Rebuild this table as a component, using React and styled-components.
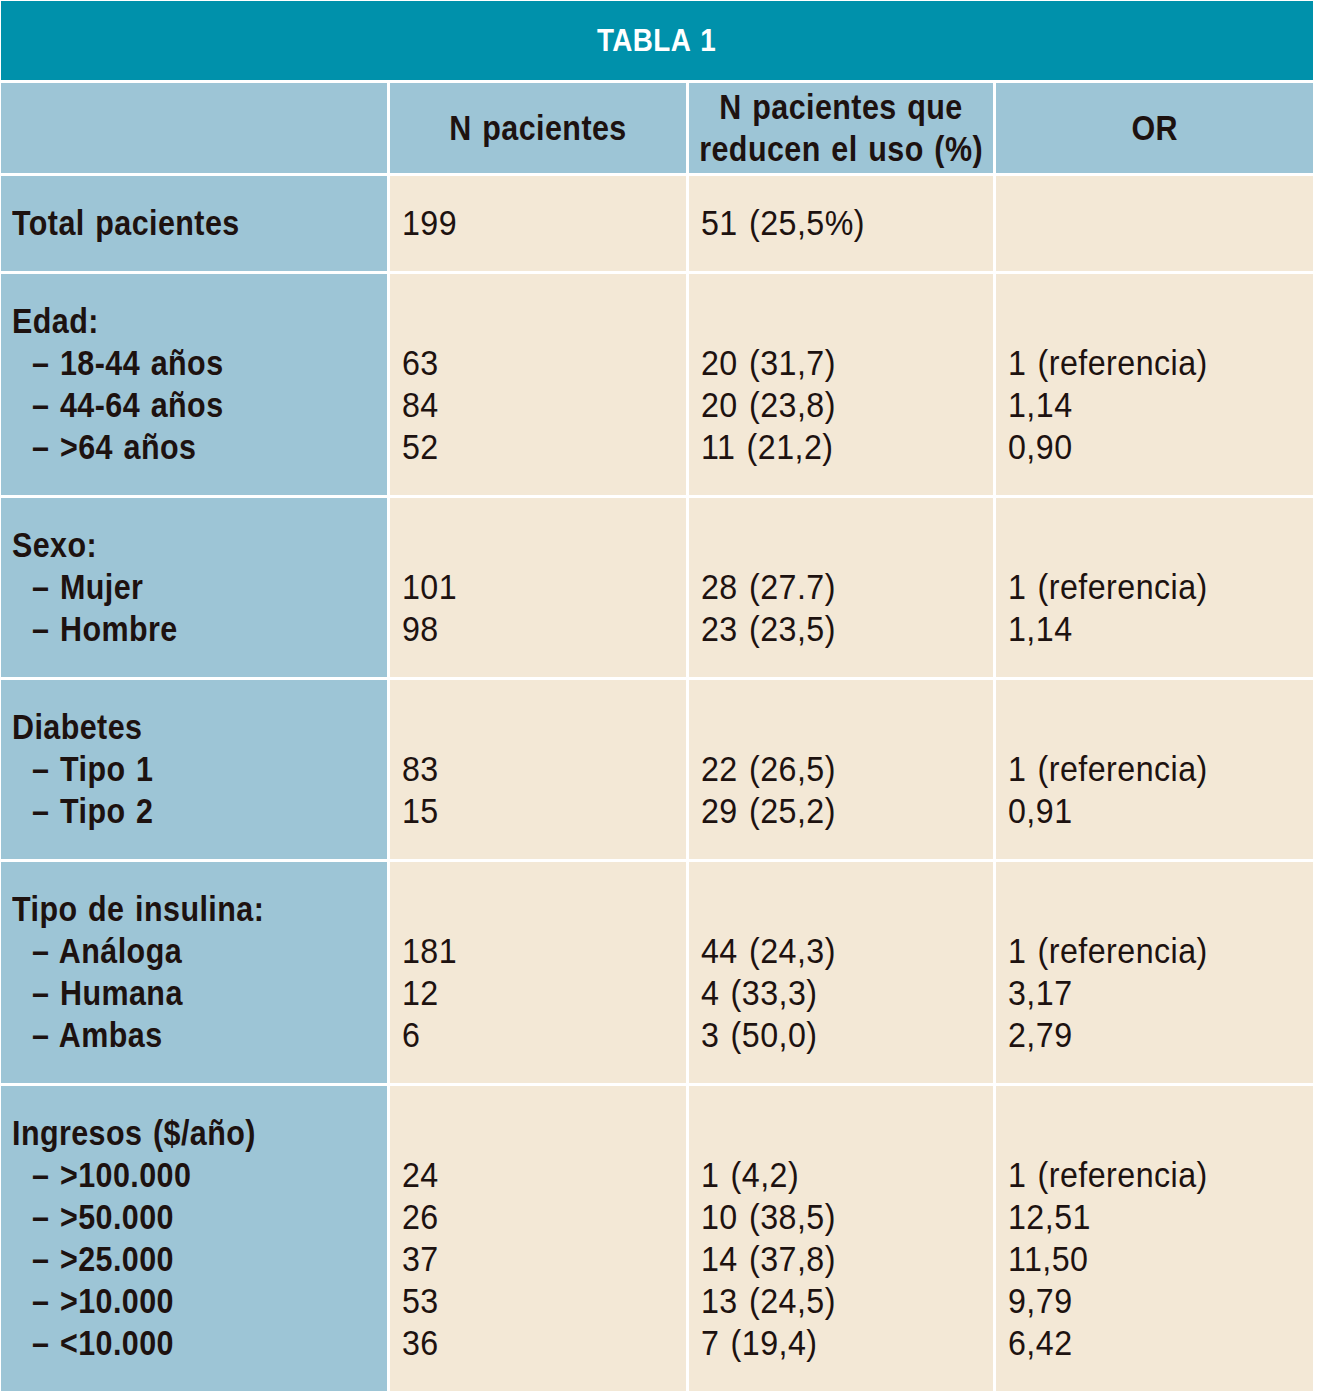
import React from "react";
import styled, { createGlobalStyle } from "styled-components";

const Global = createGlobalStyle`
  html, body { margin: 0; padding: 0; background: #ffffff; }
  body { font-family: "Liberation Sans", Arial, sans-serif; }
`;

const Page = styled.div`
  padding: 1px 8px 2px 1px;
  background: #ffffff;
`;

const Table = styled.div`
  display: grid;
  grid-template-columns: 386px 296px 304px 317px;
  column-gap: 3px;
  row-gap: 3px;
  background: #ffffff;
  color: #1d1210;
`;

const Title = styled.div`
  grid-column: 1 / -1;
  height: 79px;
  background: #0091ab;
  color: #ffffff;
  display: flex;
  align-items: center;
  justify-content: center;
  font-weight: 700;
  font-size: 32px;
`;

const Narrow = styled.span`
  display: inline-block;
  white-space: nowrap;
  letter-spacing: 0.5px;
  word-spacing: 2px;
  transform: scaleX(${(p) => (p.$bold ? 0.87 : 0.92)});
  transform-origin: ${(p) => (p.$center ? "center" : "left")} center;
`;

const HeadCell = styled.div`
  background: #9dc5d6;
  min-height: 84px;
  padding: 3px 0;
  display: flex;
  flex-direction: column;
  align-items: center;
  justify-content: center;
  text-align: center;
  font-weight: 700;
  font-size: 35px;
  line-height: 42px;
`;

const Cell = styled.div`
  background: ${(p) => (p.$label ? "#9dc5d6" : "#f3e8d6")};
  padding: 26px 8px 27px ${(p) => (p.$label ? "11px" : "12px")};
  font-size: 35px;
  line-height: 42px;
  font-weight: ${(p) => (p.$label ? 700 : 400)};
  white-space: nowrap;
`;

const Line = styled.div`
  padding-left: ${(p) => (p.$sub ? "20px" : "0")};
  height: 42px;
`;

const groups = [
  {
    label: ["Total pacientes"],
    a: ["199"],
    b: ["51 (25,5%)"],
    c: [""],
  },
  {
    label: ["Edad:", "– 18-44 años", "– 44-64 años", "– >64 años"],
    a: ["", "63", "84", "52"],
    b: ["", "20 (31,7)", "20 (23,8)", "11 (21,2)"],
    c: ["", "1 (referencia)", "1,14", "0,90"],
  },
  {
    label: ["Sexo:", "– Mujer", "– Hombre"],
    a: ["", "101", "98"],
    b: ["", "28 (27.7)", "23 (23,5)"],
    c: ["", "1 (referencia)", "1,14"],
  },
  {
    label: ["Diabetes", "– Tipo 1", "– Tipo 2"],
    a: ["", "83", "15"],
    b: ["", "22 (26,5)", "29 (25,2)"],
    c: ["", "1 (referencia)", "0,91"],
  },
  {
    label: ["Tipo de insulina:", "– Análoga", "– Humana", "– Ambas"],
    a: ["", "181", "12", "6"],
    b: ["", "44 (24,3)", "4 (33,3)", "3 (50,0)"],
    c: ["", "1 (referencia)", "3,17", "2,79"],
  },
  {
    label: ["Ingresos ($/año)", "– >100.000", "– >50.000", "– >25.000", "– >10.000", "– <10.000"],
    a: ["", "24", "26", "37", "53", "36"],
    b: ["", "1 (4,2)", "10 (38,5)", "14 (37,8)", "13 (24,5)", "7 (19,4)"],
    c: ["", "1 (referencia)", "12,51", "11,50", "9,79", "6,42"],
  },
];

function Lines({ items, label }) {
  return items.map((t, i) => (
    <Line key={i} $sub={label && i > 0}>
      {t ? <Narrow $bold={label}>{t}</Narrow> : "\u00a0"}
    </Line>
  ));
}

export default function App() {
  return (
    <Page>
      <Global />
      <Table>
        <Title>
          <Narrow $bold $center>TABLA 1</Narrow>
        </Title>
        <HeadCell />
        <HeadCell>
          <Narrow $bold $center>N pacientes</Narrow>
        </HeadCell>
        <HeadCell>
          <Narrow $bold $center>N pacientes que</Narrow>
          <Narrow $bold $center>reducen el uso (%)</Narrow>
        </HeadCell>
        <HeadCell>
          <Narrow $bold $center>OR</Narrow>
        </HeadCell>
        {groups.map((g, i) => (
          <React.Fragment key={i}>
            <Cell $label>
              <Lines items={g.label} label />
            </Cell>
            <Cell>
              <Lines items={g.a} />
            </Cell>
            <Cell>
              <Lines items={g.b} />
            </Cell>
            <Cell>
              <Lines items={g.c} />
            </Cell>
          </React.Fragment>
        ))}
      </Table>
    </Page>
  );
}
